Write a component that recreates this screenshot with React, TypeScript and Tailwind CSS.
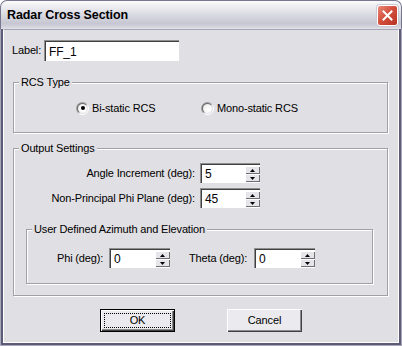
import React from "react";

function Radio({ checked }: { checked?: boolean }) {
  return (
    <span className="w-[13px] h-[13px] rounded-full bg-[linear-gradient(135deg,#8c8c8c_0%,#a8a8a8_45%,#ffffff_60%,#ffffff_100%)] flex items-center justify-center shrink-0">
      <span className="w-[11px] h-[11px] rounded-full bg-[linear-gradient(135deg,#5a5a5a_0%,#7a7a7a_45%,#e2e1e6_60%,#e2e1e6_100%)] flex items-center justify-center">
        <span className="w-[9px] h-[9px] rounded-full bg-[radial-gradient(circle_at_65%_65%,#ffffff_0%,#f6f6f6_50%,#dedede_100%)] flex items-center justify-center">
          {checked && <span className="w-[4px] h-[4px] rounded-full bg-black" />}
        </span>
      </span>
    </span>
  );
}

function SpinBtn({ up }: { up?: boolean }) {
  return (
    <div className="h-[8px] w-[15px] bg-[#e6e5ea] shadow-[inset_1px_1px_0_#ffffff,inset_-1px_-1px_0_#6f6f6f] flex items-center justify-center">
      <svg width="5" height="3" viewBox="0 0 5 3">
        {up ? (
          <polygon points="2.5,0 5,3 0,3" fill="#000" />
        ) : (
          <polygon points="0,0 5,0 2.5,3" fill="#000" />
        )}
      </svg>
    </div>
  );
}

function Sunken({
  className = "",
  children,
}: {
  className?: string;
  children?: React.ReactNode;
}) {
  return (
    <div
      className={
        "bg-white border-t border-l border-[#8e8e8e] border-b-[#ffffff] border-r-[#ffffff] " +
        className
      }
    >
      <div className="w-full h-full border-t border-l border-[#404040] border-b-[#e3e2dc] border-r-[#e3e2dc] flex items-center">
        {children}
      </div>
    </div>
  );
}

function Spin({ value, width }: { value: string; width: string }) {
  return (
    <Sunken className={"h-[20px] shrink-0 " + width}>
      <span className="flex-1 pl-[3px] text-[12px] leading-none text-black">{value}</span>
      <div className="flex flex-col">
        <SpinBtn up />
        <SpinBtn />
      </div>
    </Sunken>
  );
}

function Group({
  title,
  className = "",
  children,
}: {
  title: string;
  className?: string;
  children?: React.ReactNode;
}) {
  return (
    <div
      className={
        "relative border border-[#a0a0a6] shadow-[1px_1px_0_#ffffff,inset_1px_1px_0_#ffffff] " +
        className
      }
    >
      <span className="absolute left-[5px] top-[-8px] px-[2px] bg-[#e0dfe3] leading-[14px] whitespace-nowrap">
        {title}
      </span>
      {children}
    </div>
  );
}

export default function App() {
  return (
    <div className="w-[402px] h-[346px] flex flex-col font-['Liberation_Sans',Arial,sans-serif] text-[11px] tracking-[-0.15px] text-black select-none whitespace-nowrap">
      {/* Title bar */}
      <div className="h-[29px] shrink-0 rounded-t-[7px] border border-b-0 border-[#77768f] bg-[linear-gradient(to_bottom,#fdfdfe_0%,#eeeef2_18%,#d9d9e2_50%,#c7c7d3_80%,#d3d3dc_92%,#e2e2e8_100%)] flex items-center pl-[6px] pr-[3px]">
        <span className="flex-1 font-bold text-[12.5px] tracking-[-0.1px] text-black pt-[1px]">
          Radar Cross Section
        </span>
        <div className="w-[21px] h-[21px] rounded-[3px] border border-white bg-[linear-gradient(135deg,#e88a7a_0%,#d6503e_45%,#b63223_100%)] flex items-center justify-center shadow-[0_0_0_1px_#c9c9d4]">
          <svg width="11" height="11" viewBox="0 0 11 11">
            <path d="M1.5 1.5 L9.5 9.5 M9.5 1.5 L1.5 9.5" stroke="#fff" strokeWidth="2" strokeLinecap="square" />
          </svg>
        </div>
      </div>
      {/* Window frame */}
      <div className="flex-1 flex border-x border-b border-[#a9a8ba]">
        <div className="flex-1 flex border-x-2 border-b-2 border-[#5d5c78]">
          <div className="flex-1 flex flex-col border-x border-b border-white bg-[#e0dfe3] border-t border-t-[#a6a5b8]">
            {/* Label row */}
            <div className="flex items-center mt-[10px] pl-[8px] h-[21px]">
              <span className="w-[32px]">Label:</span>
              <Sunken className="w-[135px] h-[21px]">
                <span className="pl-[3px] text-[12px] leading-none">FF_1</span>
              </Sunken>
            </div>

            {/* RCS Type */}
            <Group title="RCS Type" className="mt-[21px] ml-[9px] w-[375px] h-[51px]">
              <div className="flex items-center pt-[17px] pl-[62px]">
                <div className="flex items-center gap-[3px] w-[125px]">
                  <Radio checked />
                  <span>Bi-static RCS</span>
                </div>
                <div className="flex items-center gap-[3px]">
                  <Radio />
                  <span>Mono-static RCS</span>
                </div>
              </div>
            </Group>

            {/* Output Settings */}
            <Group title="Output Settings" className="mt-[15px] ml-[9px] w-[375px] h-[148px]">
              <div className="flex flex-col pt-[14px]">
                <div className="flex items-center h-[20px]">
                  <span className="w-[182px] text-right pr-[1px]">Angle Increment (deg):</span>
                  <div className="ml-[4px]">
                    <Spin value="5" width="w-[60px]" />
                  </div>
                </div>
                <div className="flex items-center h-[20px] mt-[5px]">
                  <span className="w-[182px] text-right pr-[1px]">Non-Principal Phi Plane (deg):</span>
                  <div className="ml-[4px]">
                    <Spin value="45" width="w-[60px]" />
                  </div>
                </div>

                <Group
                  title="User Defined Azimuth and Elevation"
                  className="mt-[21px] ml-[12px] w-[347px] h-[55px]"
                >
                  <div className="flex items-center pt-[18px] pl-[30px]">
                    <span className="w-[52px]">Phi (deg):</span>
                    <Spin value="0" width="w-[61px]" />
                    <span className="ml-[19px] w-[65px]">Theta (deg):</span>
                    <Spin value="0" width="w-[61px]" />
                  </div>
                </Group>
              </div>
            </Group>

            {/* Buttons */}
            <div className="flex mt-[13px] h-[23px]">
              <button className="ml-[96px] w-[75px] h-[23px] border border-black bg-[#e0dfe3] p-0">
                <div className="w-full h-full bg-[#ebeaee] shadow-[inset_1px_1px_0_#ffffff,inset_-1px_-1px_0_#404040,inset_-2px_-2px_0_#8c8c8c] flex items-center justify-center p-[3px]">
                  <div className="w-full h-full border border-dotted border-black flex items-center justify-center">
                    OK
                  </div>
                </div>
              </button>
              <button className="ml-[52px] w-[75px] h-[23px] bg-[#ebeaee] shadow-[inset_1px_1px_0_#ffffff,inset_-1px_-1px_0_#404040,inset_-2px_-2px_0_#8c8c8c] flex items-center justify-center p-0">
                Cancel
              </button>
            </div>
          </div>
        </div>
      </div>
    </div>
  );
}
